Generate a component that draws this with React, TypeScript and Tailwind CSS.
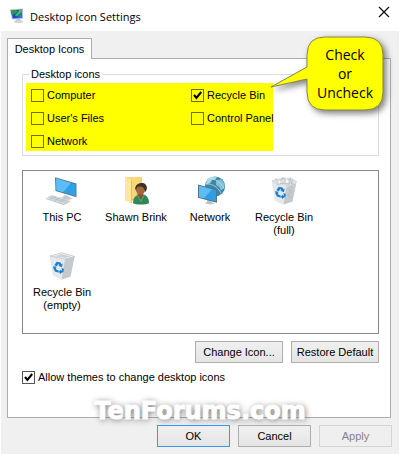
import { useState, type ReactNode } from "react";
import { clsx } from "clsx";

const FONT = "font-['Liberation_Sans',Arial,sans-serif]";

const BUTTON =
  "h-[22px] border border-[#adadad] bg-linear-to-b from-[#f0f0f0] to-[#e5e5e5] text-center leading-[20px] disabled:border-[#d5d5d5] disabled:from-[#efefef] disabled:to-[#efefef] disabled:text-[#838383]";

function CheckBox({
  label,
  initial = false,
  highlighted = false,
}: {
  label: string;
  initial?: boolean;
  highlighted?: boolean;
}) {
  const [checked, setChecked] = useState(initial);

  return (
    <label className="flex w-fit items-center gap-[3px] whitespace-nowrap">
      <span className="relative size-[13px] shrink-0">
        <input
          type="checkbox"
          checked={checked}
          onChange={(e) => setChecked(e.target.checked)}
          className={clsx(
            "block size-[13px] appearance-none border",
            highlighted ? "border-[#707000]" : "border-[#555555]"
          )}
        />
        {checked && (
          <svg viewBox="0 0 13 13" className="pointer-events-none absolute inset-0 size-[13px]">
            <path d="M3 6 L5.4 8.8 L10.2 3" fill="none" stroke="#000" strokeWidth="2.1" />
          </svg>
        )}
      </span>
      {label}
    </label>
  );
}

function TitleIcon() {
  return (
    <svg viewBox="0 0 16 16" className="size-4">
      <path d="M.8 1.5 14 .5V10.8L3 11.5Z" fill="#b4bfd0" />
      <path d="M1.8 2.4 13 1.5V9.8L3.8 10.4Z" fill="#2448c4" />
      <path d="M1.8 2.4 7 2 9 3.6 6.5 5.6 4.5 6 3.2 8Z" fill="#2f9a45" />
      <path d="M7.5 5.5 13 1.5V4.5L10 6.5 8 8.5 6 7.5Z" fill="#38c04a" />
      <path d="M10 2.5 12.8 1.6 9 5Z" fill="#86df6a" />
      <path d="M9.5 7.5 13 5V9.8L8.5 10Z" fill="#2d6fe0" />
      <path d="M7 11.2 11 11 12 13 7.5 13.5Z" fill="#b5bcc6" />
      <ellipse cx="9.5" cy="13.6" rx="4.6" ry="1.7" fill="#d0d4dc" />
    </svg>
  );
}

function ThisPcIcon() {
  return (
    <svg viewBox="0 0 32 32" preserveAspectRatio="none" className="h-[29px] w-8">
      <path d="M19 21 23 22.5 26.5 25.5 21 26.5 15 24.5Z" fill="#c4cbd0" />
      <path d="M9 1.3 30.5 8.2V23.5L9.5 16.5Z" fill="#5e7888" />
      <path d="M10 2.7 29.6 9V22L10.4 15.6Z" fill="#2f9fe6" />
      <path d="M10 2.7 25 7.6 17 17.8 10.4 15.6Z" fill="#5bbdf4" />
      <path d="M0 24.5 6 21 24 27 18 31Z" fill="#d9dee1" />
      <path d="M0 24.5 18 31 24 27V28L18 32 0 25.5Z" fill="#b3bbc0" />
      <path
        d="M2.4 23.4 20 29.4M4.4 22.2 22 28M4 26 10 22.5M8.5 27.5 14.5 24M13 29 19 25.5"
        stroke="#aeb7bc"
        strokeWidth=".7"
      />
    </svg>
  );
}

function UserIcon() {
  return (
    <svg viewBox="0 0 32 32" preserveAspectRatio="none" className="h-[29px] w-8">
      <path d="M5 1.5H22V27H5Z" fill="#eac35f" />
      <path d="M5 1.5H22V25H9Z" fill="#f7d879" />
      <path d="M5 1.5 11.5 4.5V30L5 27Z" fill="#ffe79b" />
      <path d="M11.5 4.5V30" stroke="#d9ae4d" strokeWidth=".7" />
      <path d="M13 30C13 24 16 20 21 20S29 23 29 30C26 32 16 32 13 30Z" fill="#328759" />
      <path d="M17.5 18H23.5L23 22 20.5 26 17.5 21.5Z" fill="#8a5530" />
      <path d="M17 20.5 20.8 28 24 21.5" fill="none" stroke="#5fab80" strokeWidth="1" />
      <ellipse cx="20.5" cy="14.5" rx="4.8" ry="6" fill="#a5673c" />
      <path d="M15.3 15C14 6 28.4 4.6 26.8 14.5L25.2 18C24.6 14 23.5 11.5 20 11.5 17.8 11.5 16.8 12 16.2 15Z" fill="#3c3029" />
    </svg>
  );
}

function NetworkIcon() {
  return (
    <svg viewBox="0 0 32 32" preserveAspectRatio="none" className="h-[29px] w-8">
      <ellipse cx="21" cy="11.5" rx="10.2" ry="11" fill="#3f86a6" />
      <path d="M13 4.5C16 .6 20 .5 23 1.4L21 4 18 4.5 16 8 12 9Z" fill="#a9dae7" />
      <path d="M22 5 27 3.5C30 6 31 9 30.5 13L27 16 25 12 22 10Z" fill="#80bfd4" />
      <path d="M12 9C18 8 24 12 27 19M16 2C22 4 28 8 30 14" fill="none" stroke="#c1e6ee" strokeWidth=".7" />
      <path d="M13 26 17 27V28.5L21 30 16 31.5 11 30 13 28.5Z" fill="#b9c2c8" />
      <path d="M4 9.5 23 15V29.5L4 24Z" fill="#557383" />
      <path d="M5 10.8 22.1 15.8V28.2L5 23.2Z" fill="#2e9fe5" />
      <path d="M5 10.8 18 14.6 10 24.6 5 23.2Z" fill="#5cbcf4" />
    </svg>
  );
}

function RecycleBinIcon({ full = false }: { full?: boolean }) {
  return (
    <svg viewBox="0 0 32 32" preserveAspectRatio="none" className="h-[29px] w-8">
      <path d="M4 5.5 16 2 28.5 6 24.5 28 15.5 31.5 7 27Z" fill="#dde1e3" />
      <path d="M4 5.5 19 9 17.5 30.7 15.5 31.5 7 27Z" fill="#e6e9eb" />
      <path d="M19 9 28.5 6 24.5 28 15.5 31.5Z" fill="#c4c9cd" />
      <path d="M4 5.5 16 2 28.5 6 19 9Z" fill="#f3f5f5" stroke="#b8bec2" strokeWidth=".7" />
      {full ? (
        <>
          <path d="M4.5 6 7 2.5 11 3.3 15 1 19 2 23 1.4 26 4 28.5 6 26.5 11 22 10 19 13 14 10 10 11Z" fill="#dcdee0" />
          <path
            d="M8 3 11 7 15 2 18 6 23 3 21 9 15 8 9 9M25 4 23 8 27 10M19 13 23 17 20 21 24 24"
            fill="none"
            stroke="#b3b8bb"
            strokeWidth=".8"
          />
          <path d="M10 5 13 6 11 9ZM18 3 21 6 18 8Z" fill="#fbfbfb" />
        </>
      ) : (
        <path d="M8 5.7 16 3.4 25 6.2 19 7.7Z" fill="#cdd3d6" />
      )}
      {/* three recycling arrows */}
      <g fill="#1a7fd0" transform="translate(-3.3 -3.6) scale(1.25)">
        <path d="M9.3 15.4 11.2 12.4 14.2 13 15 14.5 16 14 15.4 17.3 12.5 16 13.5 15.5 12.5 14.4 11.3 16.3Z" />
        <path d="M8.5 16.2 11.4 17 10.4 17.6 11 19.5 12.8 20.1V22L9.8 21 8.5 18Z" />
        <path d="M15 18 17 18.5 16.5 21.5 14.5 22.6 14.4 23.5 12.9 21.1 14.5 19.2V20.2L15.4 20Z" />
      </g>
    </svg>
  );
}

const ICONS: { name: string; note?: string; icon: ReactNode }[] = [
  { name: "This PC", icon: <ThisPcIcon /> },
  { name: "Shawn Brink", icon: <UserIcon /> },
  { name: "Network", icon: <NetworkIcon /> },
  { name: "Recycle Bin", note: "(full)", icon: <RecycleBinIcon full /> },
  { name: "Recycle Bin", note: "(empty)", icon: <RecycleBinIcon /> },
];

function Callout() {
  return (
    <div className="pointer-events-none absolute top-9 right-4 w-[78px]">
      <svg
        viewBox="0 0 114 76"
        className="absolute top-0 right-0 h-[76px] w-[114px] overflow-visible drop-shadow-[3px_3px_3px_rgba(0,0,0,0.5)]"
      >
        <path
          d="M55 1H95Q113 1 113 19V56Q113 74 95 74H55Q37 74 37 56V43L1 51 37 31V19Q37 1 55 1Z"
          fill="#ffff00"
          stroke="#85854a"
        />
      </svg>
      <p className="relative pt-[9px] text-center font-['Open_Sans','Noto_Sans',sans-serif] text-[14px] leading-[19px]">
        Check
        <br />
        or
        <br />
        Uncheck
      </p>
    </div>
  );
}

export default function App() {
  return (
    <div className={clsx("relative bg-white p-px text-[11px] leading-[13px] text-black", FONT)}>
      {/* Title bar */}
      <header className="flex h-[30px] items-center gap-[5px] pr-[9px] pl-2">
        <TitleIcon />
        <h1 className="flex-1 font-['Open_Sans','Noto_Sans',sans-serif] text-[11px]">
          Desktop Icon Settings
        </h1>
        <button aria-label="Close" className="mb-2 size-3">
          <svg viewBox="0 0 12 12" className="size-3">
            <path d="M1 1 11 11M11 1 1 11" stroke="#111" strokeWidth="1.3" />
          </svg>
        </button>
      </header>

      <main className="bg-[#f0f0f0] pt-[7px] pr-[7px] pb-[7px] pl-[6px]">
        <div role="tablist" className="flex">
          <button
            role="tab"
            aria-selected="true"
            className="relative z-10 -mb-px h-[21px] w-[85px] border border-b-0 border-[#acacac] bg-white"
          >
            Desktop Icons
          </button>
        </div>

        <section role="tabpanel" className="mr-px border border-[#acacac] bg-white pt-[7px] pr-[11px] pb-[33px] pl-[14px]">
          <fieldset className="border border-[#dcdcdc] px-[3px] pb-1">
            <legend className="ml-[3px] px-[2px] leading-4">Desktop icons</legend>
            <div className="mt-px grid w-[247px] grid-cols-[160px_1fr] gap-y-[10px] bg-[#ffff00] pt-[6px] pb-[3px] pl-[5px]">
              <CheckBox label="Computer" highlighted />
              <CheckBox label="Recycle Bin" initial highlighted />
              <CheckBox label="User's Files" highlighted />
              <CheckBox label="Control Panel" highlighted />
              <CheckBox label="Network" highlighted />
            </div>
          </fieldset>

          <ul className="mt-[14px] grid grid-cols-[repeat(auto-fill,74px)] gap-y-[14px] border border-[#828790] pt-[5px] pb-[21px] pl-[2px]">
            {ICONS.map((item) => (
              <li key={item.name + item.note}>
                <button className="flex w-full flex-col items-center">
                  {item.icon}
                  <span className="mt-[6px] whitespace-nowrap">{item.name}</span>
                  {item.note && <span>{item.note}</span>}
                </button>
              </li>
            ))}
          </ul>

          <div className="mt-[7px] mb-2 flex justify-end gap-2">
            <button className={clsx(BUTTON, "w-[88px]")}>Change Icon...</button>
            <button className={clsx(BUTTON, "w-[88px]")}>Restore Default</button>
          </div>
          <CheckBox label="Allow themes to change desktop icons" initial />
        </section>

        <footer className="mt-[7px] flex justify-end gap-2">
          <button className={clsx(BUTTON, "w-[73px] border-[#3399ff]!")}>OK</button>
          <button className={clsx(BUTTON, "w-[73px]")}>Cancel</button>
          <button disabled className={clsx(BUTTON, "w-[73px]")}>
            Apply
          </button>
        </footer>
      </main>

      <Callout />

      {/* Watermark */}
      <p className="pointer-events-none absolute inset-x-0 bottom-[29px] text-center font-['DejaVu_Sans',sans-serif] text-[24px] leading-[30px] font-bold text-white [-webkit-text-stroke:1px_white] [text-shadow:1px_1px_6px_#666]">
        TenForums.com
      </p>
    </div>
  );
}
